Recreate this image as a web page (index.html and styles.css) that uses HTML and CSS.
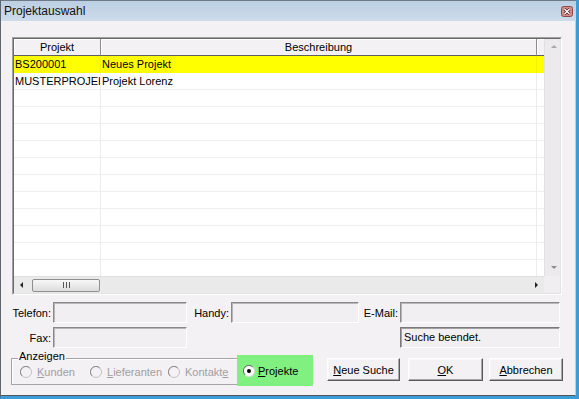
FILE: index.html
```html
<!DOCTYPE html>
<html>
<head>
<meta charset="utf-8">
<link rel="stylesheet" href="styles.css">
</head>
<body>
<div class="window">
  <div class="titlebar">
    <span class="title">Projektauswahl</span>
    <svg class="close" width="12" height="11" viewBox="0 0 12 11"><rect x="0.5" y="0.5" width="11" height="10" rx="2" fill="#d58a8a" stroke="#8a4a4a"/><path d="M3.5 3 L8.5 8 M8.5 3 L3.5 8" stroke="#3a1a1a" stroke-width="2.6"/><path d="M3.5 3 L8.5 8 M8.5 3 L3.5 8" stroke="#fff" stroke-width="1.4"/></svg>
  </div>
  <div class="client">
    <div class="list">
      <div class="list-inner">
        <div class="list-main">
          <div class="table">
            <div class="thead"><div class="th c1">Projekt</div><div class="th c2">Beschreibung</div><div class="th c3"></div></div>
            <div class="row sel"><div class="td c1">BS200001</div><div class="td c2">Neues Projekt</div><div class="td c3"></div></div>
            <div class="row"><div class="td c1">MUSTERPROJEKT</div><div class="td c2">Projekt Lorenz</div><div class="td c3"></div></div>
            <div class="row"><div class="td c1"></div><div class="td c2"></div><div class="td c3"></div></div>
            <div class="row"><div class="td c1"></div><div class="td c2"></div><div class="td c3"></div></div>
            <div class="row"><div class="td c1"></div><div class="td c2"></div><div class="td c3"></div></div>
            <div class="row"><div class="td c1"></div><div class="td c2"></div><div class="td c3"></div></div>
            <div class="row"><div class="td c1"></div><div class="td c2"></div><div class="td c3"></div></div>
            <div class="row"><div class="td c1"></div><div class="td c2"></div><div class="td c3"></div></div>
            <div class="row"><div class="td c1"></div><div class="td c2"></div><div class="td c3"></div></div>
            <div class="row"><div class="td c1"></div><div class="td c2"></div><div class="td c3"></div></div>
            <div class="row"><div class="td c1"></div><div class="td c2"></div><div class="td c3"></div></div>
            <div class="row"><div class="td c1"></div><div class="td c2"></div><div class="td c3"></div></div>
            <div class="row"><div class="td c1"></div><div class="td c2"></div><div class="td c3"></div></div>
          </div>
          <div class="vscroll">
            <span class="arr-up"></span>
            <span class="arr-down"></span>
          </div>
        </div>
        <div class="hscroll">
          <div class="htrack">
            <span class="arr-left"></span>
            <span class="thumb"><svg width="7" height="6" viewBox="0 0 7 6"><path d="M0.5 0 V6 M3.5 0 V6 M6.5 0 V6" stroke="#555" stroke-width="1"/></svg></span>
            <span class="arr-right"></span>
          </div>
          <div class="corner"></div>
        </div>
      </div>
    </div>

    <div class="fields">
      <span class="lbl">Telefon:</span>
      <div class="inp"></div>
      <span class="lbl">Handy:</span>
      <div class="inp"></div>
      <span class="lbl">E-Mail:</span>
      <div class="inp"></div>
      <span class="lbl fax-lbl">Fax:</span>
      <div class="inp fax-inp"></div>
      <div class="inp status">Suche beendet.</div>
    </div>

    <div class="bottom">
      <div class="group">
        <span class="legend">Anzeigen</span>
        <label class="opt o1"><svg class="radio" width="12" height="12" viewBox="0 0 12 12"><circle cx="6" cy="6" r="5.5" fill="#f3f1f3" stroke="#c4c4c4"/><path d="M2 9.8 A5.3 5.3 0 0 1 9.8 2" stroke="#8c8c8c" fill="none"/></svg><span><u>K</u>unden</span></label>
        <label class="opt o2"><svg class="radio" width="12" height="12" viewBox="0 0 12 12"><circle cx="6" cy="6" r="5.5" fill="#f3f1f3" stroke="#c4c4c4"/><path d="M2 9.8 A5.3 5.3 0 0 1 9.8 2" stroke="#8c8c8c" fill="none"/></svg><span><u>L</u>ieferanten</span></label>
        <label class="opt o3"><svg class="radio" width="12" height="12" viewBox="0 0 12 12"><circle cx="6" cy="6" r="5.5" fill="#f3f1f3" stroke="#c4c4c4"/><path d="M2 9.8 A5.3 5.3 0 0 1 9.8 2" stroke="#8c8c8c" fill="none"/></svg><span>Kontakt<u>e</u></span></label>
        <label class="opt active"><svg class="radio" width="12" height="12" viewBox="0 0 12 12"><circle cx="6" cy="6" r="5.5" fill="#fff" stroke="#dcdcdc"/><path d="M2 9.8 A5.3 5.3 0 0 1 9.8 2" stroke="#6a6a6a" fill="none"/><circle cx="6" cy="6" r="2" fill="#000"/></svg><span><u>P</u>rojekte</span></label>
      </div>
      <div class="buttons">
        <div class="btn b1"><span><u>N</u>eue Suche</span></div>
        <div class="btn b2"><span><u>O</u>K</span></div>
        <div class="btn b3"><span><u>A</u>bbrechen</span></div>
      </div>
    </div>
  </div>
</div>
</body>
</html>
```

FILE: styles.css
```css
* { box-sizing: border-box; }
html, body { margin: 0; padding: 0; }
body {
  width: 579px;
  height: 399px;
  overflow: hidden;
  font-family: "Liberation Sans", Arial, sans-serif;
  font-size: 11px;
  color: #000;
  background: #f3f1f3;
}
.window {
  width: 579px;
  height: 399px;
  display: flex;
  flex-direction: column;
  border-left: 1px solid #5d6670;
  border-right: 3px solid #3d9bd6;
  border-bottom: 3px solid #3d9bd6;
  background: #f3f1f3;
}
.titlebar {
  height: 21px;
  flex: none;
  border-top: 1px solid #6f7a86;
  display: flex;
  align-items: center;
  justify-content: space-between;
  padding: 0 3px 0 3px;
  background: linear-gradient(#bccfe3, #cddbea);
}
.title { font-size: 12px; color: #111; }
.close { display: block; margin-top: 1px; }

.client {
  flex: 1;
  display: flex;
  flex-direction: column;
  padding: 16px 0 0 11px;
  border-right: 1px solid #a8d4ec;
  border-bottom: 1px solid #505860;
}

/* list */
.list {
  width: 550px;
  height: 258px;
  flex: none;
  border: 1px solid;
  border-color: #a0a0a0 #fff #fff #a0a0a0;
}
.list-inner {
  height: 100%;
  border: 1px solid;
  border-color: #6a6a6a #e4e2e4 #e4e2e4 #6a6a6a;
  display: flex;
  flex-direction: column;
  background: #fff;
}
.list-main { flex: 1; display: flex; min-height: 0; }
.table { width: 530px; overflow: hidden; }
.thead { display: flex; height: 17px; }
.th {
  background: #f3f1f3;
  border-right: 1px solid #8c8c8c;
  border-bottom: 1px solid #5f5f5f;
  box-shadow: inset 1px 1px #fff;
  text-align: center;
  line-height: 16px;
}
.th.c3 { border-right: none; }
.c1 { width: 87px; flex: none; }
.c2 { width: 436px; flex: none; }
.c3 { width: 7px; flex: none; }
.row { display: flex; height: 17px; }
.td {
  border-bottom: 1px solid #efefef;
  border-right: 1px solid #ececec;
  padding-left: 1px;
  line-height: 16px;
  white-space: nowrap;
  overflow: hidden;
}
.td.c3 { border-right: none; }
.row.sel .td { background: #ffff00; border-bottom-color: #ffff00; border-right-color: #f2f200; }

.vscroll {
  width: 16px;
  flex: none;
  background: #ecEaec;
  border-left: 1px solid #e2e0e2;
  display: flex;
  flex-direction: column;
  justify-content: space-between;
  align-items: center;
  padding: 6px 0 7px 2px;
}
.arr-up {
  width: 0; height: 0;
  border-left: 3px solid transparent;
  border-right: 3px solid transparent;
  border-bottom: 3px solid #a8a8a8;
}
.arr-down {
  width: 0; height: 0;
  border-left: 3px solid transparent;
  border-right: 3px solid transparent;
  border-top: 3px solid #8c8c8c;
}
.hscroll { height: 17px; flex: none; display: flex; }
.htrack {
  width: 530px;
  background: #ebeaeb;
  border-top: 1px solid #e0dee0;
  display: flex;
  align-items: center;
  padding-left: 6px;
}
.arr-left {
  width: 0; height: 0;
  border-top: 3px solid transparent;
  border-bottom: 3px solid transparent;
  border-right: 3px solid #222;
}
.thumb {
  margin-left: 9px;
  width: 68px;
  height: 13px;
  border: 1px solid #8f8f8f;
  border-radius: 2px;
  background: linear-gradient(#f8f8f8, #dcdcdc);
  display: flex;
  align-items: center;
  justify-content: center;
}
.thumb svg { display: block; }
.arr-right {
  margin-left: auto;
  margin-right: 6px;
  width: 0; height: 0;
  border-top: 3px solid transparent;
  border-bottom: 3px solid transparent;
  border-left: 3px solid #222;
}
.corner { flex: 1; background: #f0eef0; }

/* fields */
.fields {
  display: grid;
  grid-template-columns: 41px 134px 44px 128px 41px 160px;
  grid-template-rows: 21px 21px;
  row-gap: 4px;
  margin-top: 7px;
}
.lbl { text-align: right; padding-right: 2px; align-self: center; }
.inp {
  border: 1px solid;
  border-color: #8a8a8a #fff #fff #8a8a8a;
  box-shadow: inset 1px 1px #b8b6b8;
  background: #f1eff1;
  padding: 3px 3px;
  line-height: 13px;
}
.fax-lbl { grid-column: 1; grid-row: 2; }
.fax-inp { grid-column: 2; grid-row: 2; }
.status { grid-column: 6; grid-row: 2; border-color: #7a7a7a #fff #fff #7a7a7a; box-shadow: inset 1px 1px #a0a0a0; }

/* bottom */
.bottom { display: flex; align-items: flex-start; margin-top: 7px; }
.group {
  position: relative;
  margin: 3px 0 0 -1px;
  width: 302px;
  height: 27px;
  border: 1px solid #a5a5a5;
  box-shadow: inset 1px 1px #fff;
  display: flex;
  align-items: stretch;
  padding-left: 8px;
}
.legend {
  position: absolute;
  top: -9px;
  left: 6px;
  padding: 0 1px;
  background: #f3f1f3;
  line-height: 13px;
}
.opt { display: flex; align-items: center; gap: 5px; color: #a0a0a0; flex: none; }
.radio { display: block; flex: none; }
.o1 { width: 70px; }
.o2 { width: 78px; }
.o3 { width: 69px; }
.opt.active {
  flex: 1;
  margin: -4px -1px -2px 0;
  background: #80f080;
  padding-left: 6px;
  padding-top: 1px;
  color: #000;
  gap: 3px;
}
.buttons { display: flex; margin: 3px 0 0 14px; }
.btn {
  height: 23px;
  border: 1px solid;
  border-color: #fff #5a5a5a #5a5a5a #fff;
  box-shadow: inset -1px -1px #a8a8a8, inset 1px 1px #f8f8f8;
  background: #f3f1f3;
  display: flex;
  align-items: center;
  justify-content: center;
}
.b1 { width: 73px; }
.b2 { width: 75px; margin-left: 8px; }
.b3 { width: 74px; margin-left: 6px; }
```
